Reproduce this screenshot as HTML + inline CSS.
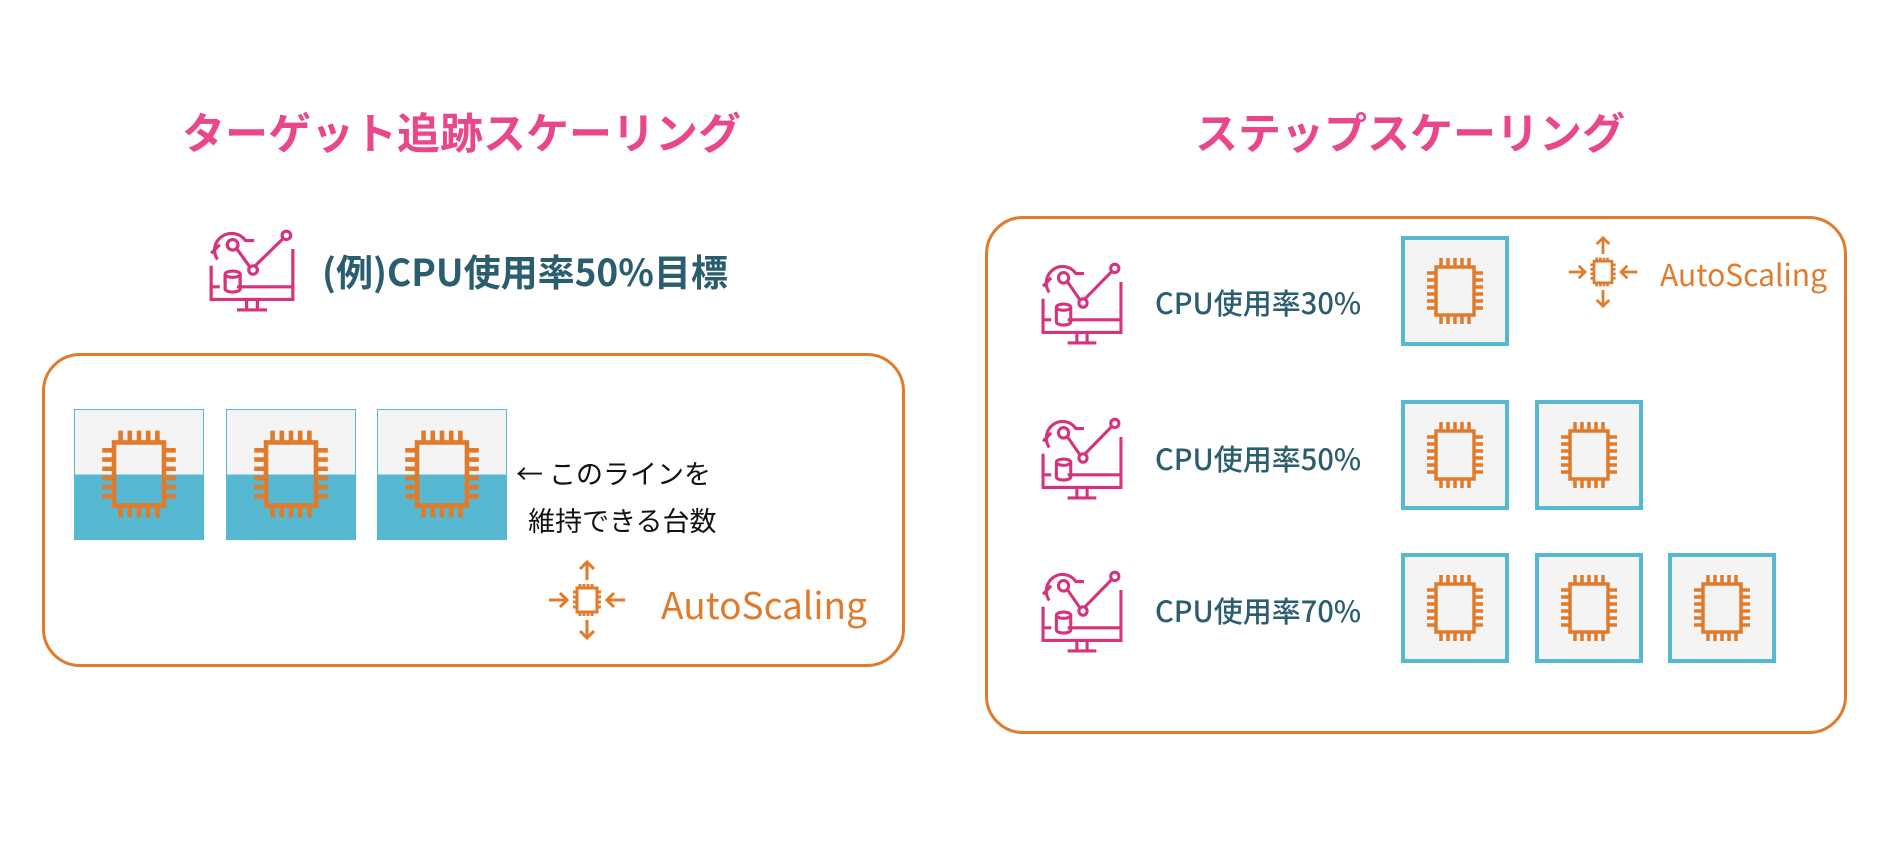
<!DOCTYPE html>
<html><head><meta charset="utf-8"><style>
body{margin:0;width:1902px;height:864px;background:#fff;position:relative;overflow:hidden;font-family:"Noto Sans CJK JP","Liberation Sans",sans-serif}
.a{position:absolute}
.t{color:#e8478b;font-weight:bold;font-size:43px;white-space:nowrap}
.d{color:#2a5d6e;white-space:nowrap}
.box{border:3px solid #e07b2c;border-radius:38px;box-sizing:border-box}
.sq{width:108px;height:110px;background:#f4f4f4;border:4px solid #56b8d1;box-sizing:border-box}
.inst{width:130px;height:131px;background:linear-gradient(#f4f4f4 0,#f4f4f4 50%,#56b8d1 50%);border:1.5px solid #56b8d1;box-sizing:border-box}
.as{color:#e07b2c;white-space:nowrap}
</style></head><body>
<svg width="0" height="0" style="position:absolute">
<defs>
<symbol id="chip" viewBox="0 0 60 70"><g fill="none" stroke="#e07b2c" stroke-width="3.5"><rect x="11" y="11" width="38" height="48"/><path d="M16 2v9M23 2v9M30 2v9M37 2v9M44 2v9M16 59v9M23 59v9M30 59v9M37 59v9M44 59v9M2 17h9M2 24h9M2 31h9M2 38h9M2 45h9M2 52h9M49 17h9M49 24h9M49 31h9M49 38h9M49 45h9M49 52h9"/></g></symbol>
<symbol id="mon" viewBox="0 0 80 80" preserveAspectRatio="none"><g fill="none" stroke="#d6337f" stroke-width="3"><path d="M2 36v32h76V20"/><path d="M2 56h8M26 56h52"/><path d="M35 68v9M45 68v9M26 78h28"/><path d="M8 30 A14 14 0 1 1 34 12 L42 12"/><circle cx="22" cy="16" r="5"/><path d="M26 20l12 17"/><circle cx="41" cy="40" r="4"/><path d="M43 36l26-26"/><circle cx="72" cy="7" r="4"/><path d="M2 24l8-8"/><ellipse cx="22" cy="44" rx="7" ry="3"/><path d="M15 44v14M29 44v14M15 58a7 3 0 0 0 14 0"/></g></symbol>
<symbol id="asi" viewBox="0 0 80 80"><g fill="none" stroke="#e07b2c" stroke-width="3"><rect x="30" y="28" width="20" height="24"/><path d="M33 24v4M37 24v4M41 24v4M45 24v4M33 52v4M37 52v4M41 52v4M45 52v4M26 32h4M26 37h4M26 42h4M26 47h4M50 32h4M50 37h4M50 42h4M50 47h4"/><path d="M40 20V2M33 9l7-7 7 7M40 60v18M33 71l7 7 7-7M2 40h18M13 33l7 7-7 7M78 40H60M67 33l-7 7 7 7"/></g></symbol>
</defs></svg>

<div class="a t" style="left:182px;top:100px">ターゲット追跡スケーリング</div>
<div class="a t" style="left:1195px;top:100px">ステップスケーリング</div>

<svg class="a" style="left:209px;top:228px" width="86" height="84"><use href="#mon"/></svg>
<div class="a d" style="left:322px;top:243px;font-size:37px;font-weight:bold">(例)CPU使用率50%目標</div>

<div class="a box" style="left:42px;top:353px;width:863px;height:314px"></div>
<div class="a inst" style="left:74px;top:409px"></div>
<div class="a inst" style="left:226px;top:409px"></div>
<div class="a inst" style="left:377px;top:409px"></div>
<svg class="a" style="left:97px;top:428px" width="84" height="92"><use href="#chip"/></svg>
<svg class="a" style="left:249px;top:428px" width="84" height="92"><use href="#chip"/></svg>
<svg class="a" style="left:400px;top:428px" width="84" height="92"><use href="#chip"/></svg>
<div class="a" style="left:516px;top:449px;font-size:27px;color:#111;line-height:47px">← このラインを<br>&nbsp;&nbsp;維持できる台数</div>
<svg class="a" style="left:547px;top:560px" width="80" height="80"><use href="#asi"/></svg>
<div class="a as" style="left:661px;top:576px;font-size:37px">AutoScaling</div>

<div class="a box" style="left:985px;top:216px;width:862px;height:518px"></div>
<svg class="a" style="left:1041px;top:261px" width="82" height="84"><use href="#mon"/></svg>
<svg class="a" style="left:1041px;top:416px" width="82" height="84"><use href="#mon"/></svg>
<svg class="a" style="left:1041px;top:569px" width="82" height="84"><use href="#mon"/></svg>
<div class="a d" style="left:1155px;top:281px;font-size:29px;font-weight:500">CPU使用率30%</div>
<div class="a d" style="left:1155px;top:437px;font-size:29px;font-weight:500">CPU使用率50%</div>
<div class="a d" style="left:1155px;top:589px;font-size:29px;font-weight:500">CPU使用率70%</div>

<div class="a sq" style="left:1401px;top:236px"></div>
<div class="a sq" style="left:1401px;top:400px"></div>
<div class="a sq" style="left:1535px;top:400px"></div>
<div class="a sq" style="left:1401px;top:553px"></div>
<div class="a sq" style="left:1535px;top:553px"></div>
<div class="a sq" style="left:1668px;top:553px"></div>
<svg class="a" style="left:1420px;top:256px" width="70" height="70"><use href="#chip"/></svg>
<svg class="a" style="left:1420px;top:420px" width="70" height="70"><use href="#chip"/></svg>
<svg class="a" style="left:1554px;top:420px" width="70" height="70"><use href="#chip"/></svg>
<svg class="a" style="left:1420px;top:573px" width="70" height="70"><use href="#chip"/></svg>
<svg class="a" style="left:1554px;top:573px" width="70" height="70"><use href="#chip"/></svg>
<svg class="a" style="left:1687px;top:573px" width="70" height="70"><use href="#chip"/></svg>

<svg class="a" style="left:1567px;top:236px" width="72" height="72"><use href="#asi"/></svg>
<div class="a as" style="left:1660px;top:251px;font-size:30px">AutoScaling</div>
</body></html>
